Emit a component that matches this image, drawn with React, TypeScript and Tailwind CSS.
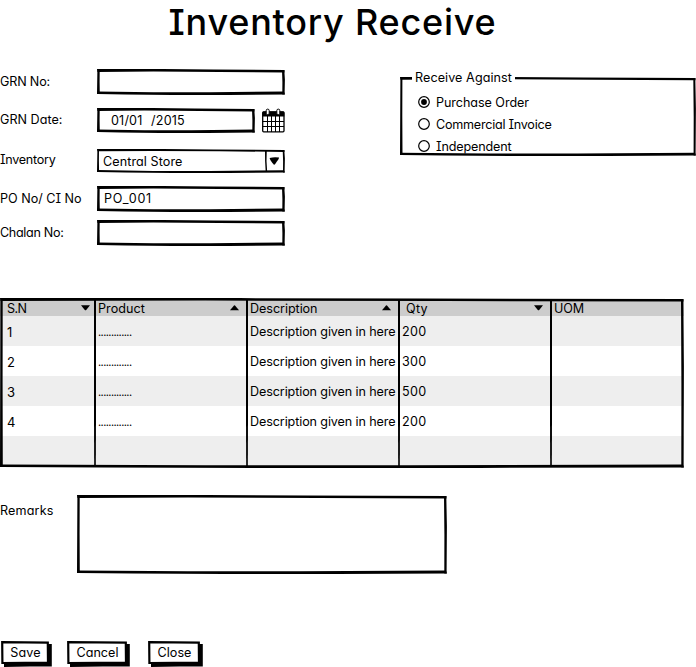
import { useLayoutEffect, useRef, useState, type ReactNode } from "react";

/* One line of text, tracked so that it fills the given width. */
function Label({ w, className = "pt-[2px]", children }: { w: number; className?: string; children: string }) {
  const ref = useRef<HTMLSpanElement>(null);
  const [tracking, setTracking] = useState(0);
  useLayoutEffect(() => {
    const el = ref.current;
    if (el) setTracking((w - el.getBoundingClientRect().width) / children.length);
  }, []);
  return (
    <span ref={ref} className={`block w-fit shrink-0 whitespace-pre ${className}`} style={{ letterSpacing: `${tracking}px` }}>
      {children}
    </span>
  );
}

/* Hand-drawn outline laid over the edge of a box. */
function Outline({ w, h, t = 3 }: { w: number; h: number; t?: number }) {
  const top = `M0 0 L${w * 0.35} .1 L${w * 0.62} 0.5 L${w - 0.5} .9 L${w - 0.5} ${t + 0.6} L${w * 0.65} ${t} L${w * 0.3} ${t - 0.4} L.5 ${t}Z`;
  const bottom = `M.3 ${h - t - 0.6} L${w * 0.3} ${h - t + 0.2} L${w * 0.6} ${h - t + 0.3} L${w - 1} ${h - t - 0.5} L${w} ${h - 0.4} L${w * 0.7} ${h - 0.1} L${w * 0.4} ${h} L${w * 0.15} ${h - 0.6} L.3 ${h - 1.1}Z`;
  const left = `M.4 0 L${t - 0.3} 0 L${t - 0.4} ${h * 0.5} L${t - 0.2} ${h - 1} L0 ${h - 1} L.2 ${h * 0.5}Z`;
  const right = `M${w - t} 1 L${w - 0.7} .9 L${w - 0.1} ${h * 0.4} L${w - 0.4} ${h - 0.4} L${w - t + 0.3} ${h - 0.5} L${w - t + 0.4} ${h * 0.5}Z`;
  return (
    <svg className="pointer-events-none absolute inset-0" width={w} height={h} aria-hidden="true">
      <path d={top} />
      <path d={bottom} />
      <path d={left} />
      <path d={right} />
    </svg>
  );
}

function Field({ label, lw, mt, children }: { label: string; lw: number; mt: string; children: ReactNode }) {
  return (
    <div className={`flex h-[26px] items-center ${mt}`}>
      <div className={`w-[97px] shrink-0 ${label === "Inventory" ? "-mt-[5px]" : "-mt-[3px]"}`}>
        <Label w={lw}>{label}</Label>
      </div>
      {children}
    </div>
  );
}

function TextBox({ children }: { children?: ReactNode }) {
  return (
    <div className="relative flex h-[26px] w-[188px] items-center pb-[3px] pl-[7px]">
      {children}
      <Outline w={188} h={26} />
    </div>
  );
}

function Calendar() {
  return (
    <svg className="ml-[6px]" width="24" height="25" viewBox="0 0 24 25" aria-hidden="true">
      <rect x="1.7" y="4" width="21.3" height="19.8" rx="1" fill="white" stroke="black" strokeWidth="1.3" />
      <path d="M1.5 4.5Q1.5 3.5 2.5 3.5H22.3Q23.3 3.5 23.3 4.5V8.6H1.5Z" />
      <path d="M6.5 8V24M10.5 8V24M14.5 8V24M18.5 8V24M1.5 13.5H23M1.5 18.5H23" stroke="black" strokeWidth="1" fill="none" />
      <rect x="5.2" y="1.1" width="3" height="5.6" rx="1.5" fill="white" stroke="black" strokeWidth="1" />
      <rect x="15.8" y="1.1" width="3" height="5.6" rx="1.5" fill="white" stroke="black" strokeWidth="1" />
    </svg>
  );
}

function Radio({ label, w, checked = false }: { label: string; w: number; checked?: boolean }) {
  return (
    <div className="flex h-[22px] items-center gap-[6px]">
      <svg width="12" height="12" viewBox="0 0 12 12" aria-hidden="true">
        <circle cx="6" cy="6" r="5.3" fill="white" stroke="black" strokeWidth="1.2" />
        {checked && <circle cx="6" cy="6" r="2.9" />}
      </svg>
      <Label w={w}>{label}</Label>
    </div>
  );
}

function Sort({ up = false }: { up?: boolean }) {
  return (
    <svg width="9" height="6" viewBox="0 0 9 6" aria-hidden="true">
      <path d={up ? "M0 5.3L4 .4Q4.5 0 5 .4L9 5.3Z" : "M0 .2H9L5.2 5Q4.5 5.6 3.8 5Z"} />
    </svg>
  );
}

const columns = [
  { name: "S.N", w: 19.5, cell: "w-[94px] pl-[7px] pr-1", sort: "down" },
  { name: "Product", w: 47, cell: "w-[152px] pl-1 pr-[7px]", sort: "up" },
  { name: "Description", w: 67.5, cell: "w-[152px] pl-1 pr-[7px]", sort: "up" },
  { name: "Qty", w: 22, cell: "w-[152px] pl-2 pr-[7px]", sort: "down" },
  { name: "UOM", w: 30, cell: "w-[132px] pl-1", sort: "" },
];

const rows = [
  { sn: "1", qty: "200", bg: "bg-[#eeeeee]" },
  { sn: "2", qty: "300", bg: "bg-white" },
  { sn: "3", qty: "500", bg: "bg-[#eeeeee]" },
  { sn: "4", qty: "200", bg: "bg-white" },
];

function ReceiveTable() {
  return (
    <div className="relative h-[170px] w-[684px] pt-[2px]">
      <div className="flex h-4 bg-[#cccccc]">
        {columns.map((c) => (
          <div key={c.name} className={`flex items-center justify-between ${c.cell}`}>
            <Label w={c.w}>{c.name}</Label>
            {c.sort && <Sort up={c.sort === "up"} />}
          </div>
        ))}
      </div>
      {rows.map((r) => (
        <div key={r.sn} className={`flex h-[30px] items-center ${r.bg}`}>
          <div className="w-[94px] pt-[2px] pl-[7px] text-[13px] leading-4">{r.sn}</div>
          <div className="w-[152px] pl-1">
            <Label w={33.5} className="pt-[2px] text-[11px]">.............</Label>
          </div>
          <div className="w-[152px] pl-1">
            <Label w={145.5}>Description given in here</Label>
          </div>
          <div className="w-[152px] pl-1">
            <Label w={24.5}>{r.qty}</Label>
          </div>
        </div>
      ))}
      <div className="h-[30px] bg-[#eeeeee]" />
      <svg className="pointer-events-none absolute inset-0" width="684" height="170" aria-hidden="true">
        {[95, 247, 399, 551].map((x) => (
          <path key={x} d={`M${x - 1} 2H${x + 1}V120L${x + 0.8} 169H${x - 0.8}L${x - 1} 120Z`} />
        ))}
      </svg>
      <Outline w={684} h={170} t={3} />
    </div>
  );
}

function Button({ label, w, lw, size }: { label: string; w: number; lw: number; size: string }) {
  return (
    <button className={`relative flex h-[26px] justify-center pr-[2px] ${size}`}>
      <svg className="absolute inset-0" width={w + 3} height="26" aria-hidden="true">
        <path d={`M3 3H${w + 2.8}V25.6L${w * 0.6} 25.4L3 25.9Z`} />
        <path d={`M1.2 1.2L${w - 1.2} 1.6L${w - 1} 21.5L1.4 22Z`} fill="white" stroke="black" strokeWidth="2.2" />
      </svg>
      <span className="relative flex h-[22px] items-center">
        <Label w={lw}>{label}</Label>
      </span>
    </button>
  );
}

export default function App() {
  return (
    <main className="h-[667px] w-[696px] overflow-hidden bg-white font-['Inter','Open_Sans',sans-serif] text-[12.6px] leading-4 text-black [font-feature-settings:'cv11','cv08']">
      <h1 className="flex h-[69px] pl-[168.5px] text-[36px] leading-[45px] font-medium">
        <Label w={328} className="pt-0">Inventory Receive</Label>
      </h1>

      <div className="flex h-[229px] items-start justify-between">
        <section>
          <Field label="GRN No:" lw={50} mt="">
            <TextBox />
          </Field>
          <Field label="GRN Date:" lw={62.5} mt="mt-3">
            <div className="relative flex h-[25px] w-[158px] items-center pl-[14px]">
              <Label w={31.5}>01/01</Label>
              <Label w={34} className="ml-[8.5px] pt-[2px]">/2015</Label>
              <Outline w={158} h={25} />
            </div>
            <Calendar />
          </Field>
          <Field label="Inventory" lw={55.5} mt="mt-[15px]">
            <div className="relative flex h-6 w-[188px] items-center justify-between pr-[2px] pl-[6px]">
              <Label w={79.5}>Central Store</Label>
              <svg width="18" height="24" viewBox="0 0 18 24" aria-hidden="true">
                <path d="M0 1H1.8L1.5 12L2.2 23H.7L.1 12Z" />
                <path d="M4.6 9Q9.5 7.6 14 8.6Q14.4 9.5 10 15.3Q9.4 16 8.7 15.5Q5 11 4.6 9Z" />
              </svg>
              <Outline w={188} h={24} t={2.3} />
            </div>
          </Field>
          <Field label="PO No/ CI No" lw={81.5} mt="mt-3">
            <TextBox>
              <Label w={48}>PO_001</Label>
            </TextBox>
          </Field>
          <Field label="Chalan No:" lw={63.5} mt="mt-2">
            <TextBox />
          </Field>
        </section>

        <fieldset className="relative mt-2 h-[79px] w-[296px] pl-[18px]">
          <Outline w={296} h={79} t={2.7} />
          <div className="relative -mt-2 mb-[6px] -ml-[6px] flex h-4 w-[103px] items-center bg-white pl-[3px]">
            <Label w={97}>Receive Against</Label>
          </div>
          <Radio label="Purchase Order" w={93} checked />
          <Radio label="Commercial Invoice" w={115.5} />
          <Radio label="Independent" w={75.5} />
        </fieldset>
      </div>

      <ReceiveTable />

      <section className="mt-[27px] flex h-[146px] items-start">
        <div className="w-[77px] pt-[6px]">
          <Label w={53.5}>Remarks</Label>
        </div>
        <div className="relative h-[79px] w-[370px]">
          <Outline w={370} h={79} />
        </div>
      </section>

      <div className="flex pl-px">
        <Button label="Save" w={48} lw={30.5} size="w-[51px]" />
        <div className="w-[15px]" />
        <Button label="Cancel" w={60} lw={42} size="w-[63px]" />
        <div className="w-[18px]" />
        <Button label="Close" w={52} lw={34} size="w-[55px]" />
      </div>
    </main>
  );
}
